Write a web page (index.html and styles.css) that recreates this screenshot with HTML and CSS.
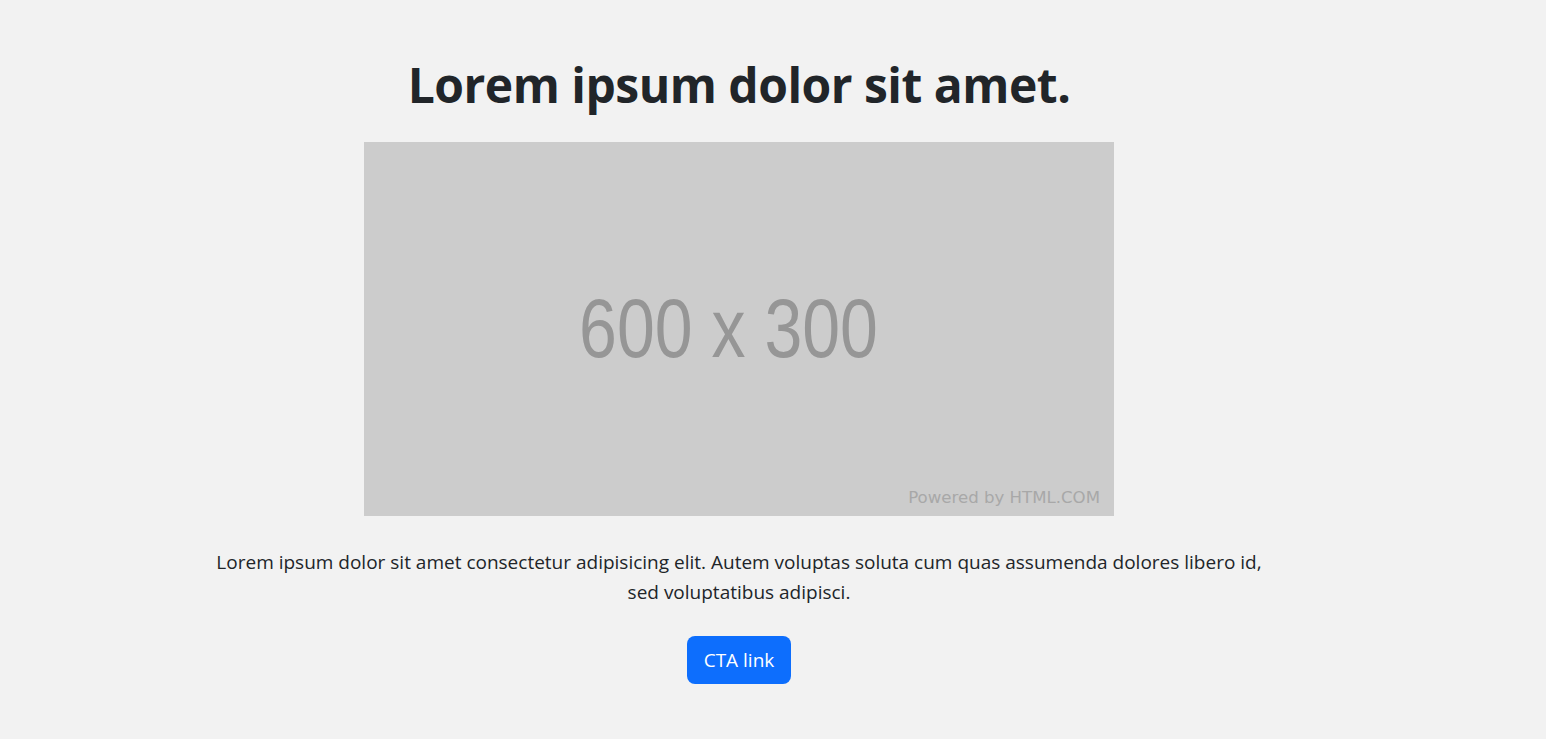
FILE: index.html
```html
<!DOCTYPE html>
<html>
<head>
<link rel="stylesheet" href="styles.css">
</head>
<body>
<main class="page">
  <h1 class="title">Lorem ipsum dolor sit amet.</h1>
  <div class="placeholder">
    <span class="placeholder-size">600 x 300</span>
    <span class="placeholder-credit">Powered by HTML.COM</span>
  </div>
  <p class="lead">Lorem ipsum dolor sit amet consectetur adipisicing elit. Autem voluptas soluta cum quas assumenda dolores libero id, sed voluptatibus adipisci.</p>
  <a class="cta" href="#">CTA link</a>
</main>
</body>
</html>
```

FILE: styles.css
```css
body {
margin: 0;
background: #f2f2f2;
color: #212529;
font-family: "Open Sans", "Noto Sans", sans-serif;
}
.page {
margin-right: 68px;
padding: 56px 0 55px;
display: flex;
flex-direction: column;
align-items: center;
text-align: center;
}
.title {
margin: 0 0 28px;
font-size: 48px;
font-weight: 700;
line-height: 1.2;
letter-spacing: -0.5px;
}
.placeholder {
position: relative;
width: 750px;
height: 374px;
background: #cccccc;
display: flex;
align-items: center;
justify-content: center;
}
.placeholder-size {
margin: 0 22px 0 0;
font-family: "Liberation Sans", Arial, sans-serif;
font-size: 84px;
color: #969696;
transform: scaleX(0.81);
}
.placeholder-credit {
position: absolute;
right: 14px;
bottom: 9px;
font-family: "DejaVu Sans", sans-serif;
font-size: 16.6px;
color: #a8a8a8;
}
.lead {
max-width: 1060px;
margin: 31px 0 29px;
font-size: 19px;
line-height: 30px;
}
.cta {
display: inline-block;
padding: 8px 17px;
border-radius: 8px;
background: #0d6efd;
color: #fff;
font-size: 19px;
line-height: 32px;
text-decoration: none;
}
```
